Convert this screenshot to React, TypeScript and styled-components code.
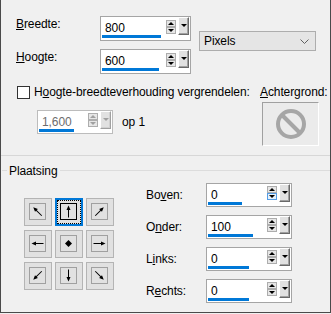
import React from "react";
import styled, { createGlobalStyle } from "styled-components";

const GlobalStyle = createGlobalStyle`
  html, body {
    margin: 0;
    padding: 0;
    background: #f0f0f0;
  }
  body {
    font-family: "Liberation Sans", Arial, sans-serif;
    font-size: 12px;
    line-height: 14px;
    letter-spacing: -0.1px;
    color: #000;
  }
`;

const Panel = styled.div`
  width: 331px;
  height: 313px;
  box-sizing: border-box;
  border: 1px solid #4a4a4a;
  border-top: none;
  background: #f0f0f0;
  display: flex;
  flex-direction: column;
`;

const TopGrid = styled.div`
  display: grid;
  grid-template-columns: 76px 91px 117px;
  grid-template-rows: 25px 25px;
  column-gap: 8px;
  row-gap: 8px;
  margin: 16px 0 0 15px;
`;

const TopLabel = styled.div`
  padding-top: 1px;
  white-space: nowrap;
`;

const Select = styled.div`
  grid-column: 3;
  grid-row: 1 / 3;
  align-self: start;
  margin-top: 15px;
  height: 20px;
  box-sizing: border-box;
  border: 1px solid #adadad;
  background: #e5e5e5;
  display: flex;
  align-items: center;
  justify-content: space-between;
  padding: 0 6px 0 4px;
`;

const SpinBox = styled.div<{ $w: number; $h: number; $disabled?: boolean }>`
  display: flex;
  box-sizing: border-box;
  width: ${(p) => p.$w}px;
  height: ${(p) => p.$h}px;
  border: 1px solid ${(p) => (p.$disabled ? "#bcbcbc" : "#a5a5a5")};
  background: #fff;
  padding: 0 1px;
`;

const Field = styled.div<{ $pb: number }>`
  flex: 1;
  min-width: 0;
  display: flex;
  flex-direction: column;
  padding-bottom: ${(p) => p.$pb}px;
`;

const Value = styled.div<{ $disabled?: boolean }>`
  flex: 1;
  display: flex;
  align-items: center;
  padding: 4px 0 0 3px;
  color: ${(p) => (p.$disabled ? "#6d6d6d" : "#000")};
`;

const Bar = styled.div`
  height: 3px;
  background: #0078d7;
`;

const SpinCol = styled.div<{ $pt: number }>`
  width: 10px;
  margin-right: 2px;
  padding-top: ${(p) => p.$pt}px;
  display: flex;
  flex-direction: column;
`;

const SpinBtn = styled.div<{ $hot?: boolean }>`
  height: 7px;
  box-sizing: border-box;
  border: 1px solid ${(p) => (p.$hot ? "#569de5" : "#adadad")};
  background: ${(p) => (p.$hot ? "#e5f1fb" : "#e6e6e6")};
  display: flex;
  align-items: center;
  justify-content: center;
`;

const Tri = styled.div<{ $up?: boolean; $disabled?: boolean }>`
  width: 0;
  height: 0;
  border-left: 3px solid transparent;
  border-right: 3px solid transparent;
  ${(p) =>
    p.$up
      ? `border-bottom: 3px solid ${p.$disabled ? "#a0a0a0" : "#000"};`
      : `border-top: 3px solid ${p.$disabled ? "#a0a0a0" : "#000"};`}
`;

const DropBtn = styled.div<{ $disabled?: boolean }>`
  width: 11px;
  height: 18px;
  box-sizing: border-box;
  background: #e1e1e1;
  border-top: 1px solid #fff;
  border-left: 1px solid #fff;
  border-right: 1px solid ${(p) => (p.$disabled ? "#a0a0a0" : "#696969")};
  border-bottom: 1px solid ${(p) => (p.$disabled ? "#a0a0a0" : "#696969")};
  box-shadow: inset -1px -1px 0 ${(p) => (p.$disabled ? "#d0d0d0" : "#a0a0a0")};
  display: flex;
  justify-content: center;
  padding-top: 6px;
`;

const Middle = styled.div`
  display: grid;
  grid-template-columns: 243px 1fr;
  margin: 11px 0 0 16px;
`;

const LeftCol = styled.div`
  display: flex;
  flex-direction: column;
`;

const CheckRow = styled.div`
  display: flex;
  align-items: flex-start;
  gap: 4px;
  white-space: nowrap;
`;

const CheckBox = styled.div`
  width: 13px;
  height: 13px;
  box-sizing: border-box;
  margin-top: 1px;
  border: 1px solid #333;
  background: #fff;
`;

const RatioRow = styled.div`
  display: flex;
  align-items: center;
  gap: 9px;
  margin: 11px 0 0 20px;
`;

const RightCol = styled.div`
  display: flex;
  flex-direction: column;
  white-space: nowrap;
`;

const Swatch = styled.div`
  width: 57px;
  height: 44px;
  box-sizing: border-box;
  margin: 3px 0 0 2px;
  border-top: 1px solid #a0a0a0;
  border-left: 1px solid #a0a0a0;
  border-right: 1px solid #fff;
  border-bottom: 1px solid #fff;
  background: #ebebeb;
  display: flex;
  align-items: center;
  justify-content: center;
`;

const Separator = styled.div`
  margin-top: 9px;
  border-top: 1px solid #d7d7d7;
`;

const Heading = styled.div`
  display: flex;
  align-items: flex-start;
  margin-top: 8px;
  padding-left: 1px;
  &::before,
  &::after {
    content: "";
    margin-top: 6px;
    border-top: 1px solid #dcdcdc;
  }
  &::before {
    width: 5px;
    margin-right: 2px;
  }
  &::after {
    flex: 1;
    margin-left: 3px;
  }
`;

const Body = styled.div`
  display: flex;
  align-items: flex-start;
  margin-top: 5px;
`;

const PosGrid = styled.div`
  display: grid;
  grid-template-columns: repeat(3, 28px);
  grid-auto-rows: 28px;
  column-gap: 3px;
  row-gap: 4px;
  margin: 15px 0 0 23px;
`;

const PosBtn = styled.div<{ $sel?: boolean }>`
  width: 28px;
  height: 28px;
  box-sizing: border-box;
  background: #e1e1e1;
  border: ${(p) => (p.$sel ? "2px solid #0078d7" : "1px solid #b4b4b4")};
  display: flex;
  align-items: flex-start;
  padding: ${(p) => (p.$sel ? "0" : "4px 0 0 4px")};
`;

const FocusRing = styled.div`
  width: 24px;
  height: 24px;
  box-sizing: border-box;
  border: 1px dotted #000;
  padding: 2px 0 0 2px;
`;

const Glyph = styled.div<{ $sel?: boolean }>`
  width: 17px;
  height: 17px;
  box-sizing: border-box;
  border: 1px solid ${(p) => (p.$sel ? "#000" : "#a0a0a0")};
  display: flex;
`;

const Form = styled.div`
  display: grid;
  grid-template-columns: 60px 86px;
  grid-auto-rows: 24px;
  row-gap: 8px;
  margin-left: 32px;
`;

const FormLabel = styled.div`
  display: flex;
  align-items: center;
  white-space: nowrap;
`;

type SpinProps = {
  w: number;
  h: number;
  value: string;
  bar: number;
  disabled?: boolean;
  hotDown?: boolean;
};

const Spin = ({ w, h, value, bar, disabled, hotDown }: SpinProps) => (
  <SpinBox $w={w} $h={h} $disabled={disabled}>
    <Field $pb={h - 23}>
      <Value $disabled={disabled}>{value}</Value>
      <Bar style={{ width: bar }} />
    </Field>
    <SpinCol $pt={h - 22}>
      <SpinBtn>
        <Tri $up $disabled={disabled} />
      </SpinBtn>
      <SpinBtn $hot={hotDown}>
        <Tri $disabled={disabled} />
      </SpinBtn>
    </SpinCol>
    <DropBtn $disabled={disabled}>
      <Tri $disabled={disabled} />
    </DropBtn>
  </SpinBox>
);

// angle in degrees, -1 = centre diamond
const Arrow = ({ angle }: { angle: number }) => (
  <svg width="15" height="15" viewBox="0 0 15 15">
    {angle < 0 ? (
      <polygon points="7.5,4 11,7.5 7.5,11 4,7.5" fill="#000" />
    ) : (
      <g transform={`rotate(${angle} 7.5 7.5)`}>
        <line x1="7.5" y1="13.5" x2="7.5" y2="4" stroke="#000" strokeWidth="1" />
        <polygon points="7.5,1.5 5.5,6 9.5,6" fill="#000" />
      </g>
    )}
  </svg>
);

const NoSign = () => (
  <svg width="34" height="34" viewBox="0 0 34 34">
    <circle cx="17" cy="17" r="13" fill="none" stroke="#a6a6a6" strokeWidth="4" />
    <line x1="8" y1="8" x2="26" y2="26" stroke="#a6a6a6" strokeWidth="4" />
  </svg>
);

const positions = [315, 0, 45, 270, -1, 90, 225, 180, 135];

const fields = [
  { pre: "Bo", key: "v", post: "en:", value: "0", bar: 34, hot: true },
  { pre: "O", key: "n", post: "der:", value: "100", bar: 45 },
  { pre: "L", key: "i", post: "nks:", value: "0", bar: 41 },
  { pre: "R", key: "e", post: "chts:", value: "0", bar: 41 },
];

const App = () => {
  return (
    <>
      <GlobalStyle />
      <Panel>
        <TopGrid>
          <TopLabel>
            <u>B</u>reedte:
          </TopLabel>
          <Spin w={91} h={25} value="800" bar={59} />
          <Select>
            <span>Pixels</span>
            <svg width="9" height="5" viewBox="0 0 9 5">
              <polyline points="0.5,0.5 4.5,4.5 8.5,0.5" fill="none" stroke="#606060" strokeWidth="1" />
            </svg>
          </Select>
          <TopLabel>
            <u>H</u>oogte:
          </TopLabel>
          <Spin w={91} h={25} value="600" bar={57} />
        </TopGrid>

        <Middle>
          <LeftCol>
            <CheckRow>
              <CheckBox />
              <span>
                H<u>o</u>ogte-breedteverhouding vergrendelen:
              </span>
            </CheckRow>
            <RatioRow>
              <Spin w={76} h={24} value="1,600" bar={35} disabled />
              <span>op 1</span>
            </RatioRow>
          </LeftCol>
          <RightCol>
            <span>
              <u>A</u>chtergrond:
            </span>
            <Swatch>
              <NoSign />
            </Swatch>
          </RightCol>
        </Middle>

        <Separator />
        <Heading>Plaatsing</Heading>

        <Body>
          <PosGrid>
            {positions.map((a, i) =>
              i === 1 ? (
                <PosBtn key={i} $sel>
                  <FocusRing>
                    <Glyph $sel>
                      <Arrow angle={a} />
                    </Glyph>
                  </FocusRing>
                </PosBtn>
              ) : (
                <PosBtn key={i}>
                  <Glyph>
                    <Arrow angle={a} />
                  </Glyph>
                </PosBtn>
              )
            )}
          </PosGrid>
          <Form>
            {fields.map((f) => (
              <React.Fragment key={f.pre}>
                <FormLabel>
                  {f.pre}
                  <u>{f.key}</u>
                  {f.post}
                </FormLabel>
                <Spin w={86} h={24} value={f.value} bar={f.bar} hotDown={f.hot} />
              </React.Fragment>
            ))}
          </Form>
        </Body>
      </Panel>
    </>
  );
};

export default App;
